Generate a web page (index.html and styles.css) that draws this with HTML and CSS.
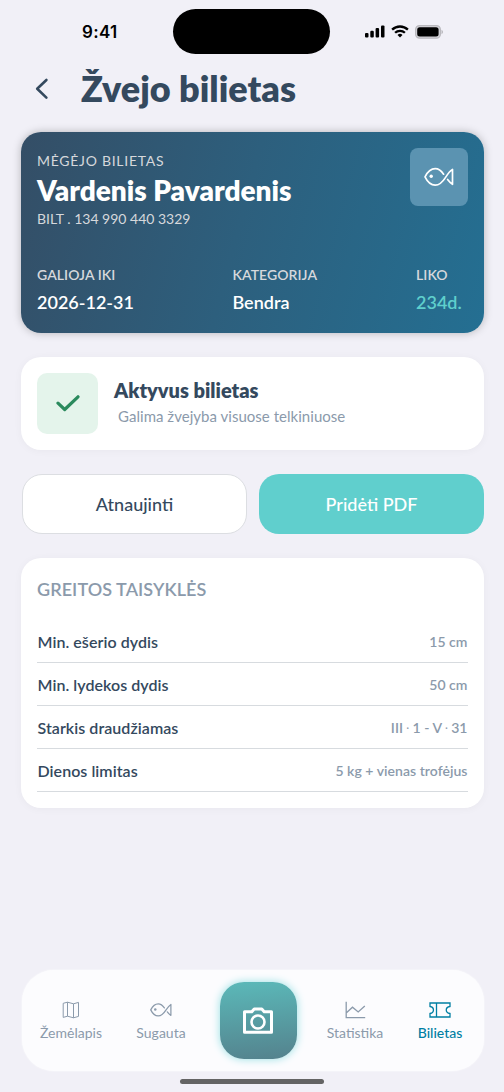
FILE: index.html
```html
<!DOCTYPE html>
<html lang="lt">
<head>
<meta charset="utf-8">
<meta name="viewport" content="width=device-width, initial-scale=1">
<title>Žvejo bilietas</title>
<link rel="stylesheet" href="styles.css">
</head>
<body>
<svg class="defs" width="0" height="0" aria-hidden="true">
  <symbol id="fish" viewBox="0 0 30 20">
    <path d="M19.600 7.200C17.200 3.600 14.400 1.600 11.200 1.600 7 1.600 3.400 5 1 9.800c2.400 4.900 6 8.300 10.200 8.300 4.300 0 7.600-3.400 10.200-7.500 2-3.100 4.200-6.400 7.100-8.200v14.900c-1.900-1.200-3.500-2.900-4.900-4.800" fill="none" stroke="currentColor" stroke-linecap="round" stroke-linejoin="round"/>
    <circle cx="7.200" cy="9.200" r="1.700" fill="currentColor"/>
  </symbol>
</svg>
<div class="status-bar">
  <span class="clock">9:41</span>
  <span class="island"></span>
  <span class="system">
    <svg width="20" height="13" viewBox="0 0 20 13" fill="#000"><rect x="0" y="8" width="3.500" height="4.600" rx="1.100"/><rect x="5.300" y="5.800" width="3.500" height="6.800" rx="1.100"/><rect x="10.600" y="3" width="3.500" height="9.600" rx="1.100"/><rect x="16" y="0.400" width="3.500" height="12.200" rx="1.100"/></svg>
    <svg width="18" height="13" viewBox="0 0 18 13" fill="none" stroke="#000" stroke-width="2.300"><path d="M1.100 4.700a11.400 11.400 0 0 1 15.800 0"/><path d="M4.100 7.800a7 7 0 0 1 9.800 0"/><path d="M9 12.500 6.500 10a3.600 3.600 0 0 1 5 0z" fill="#000" stroke="none"/></svg>
    <svg width="29" height="14" viewBox="0 0 29 14"><rect x=".6" y=".6" width="24.800" height="12.600" rx="4" fill="#d4d3d9" stroke="#b9b8bd" stroke-width="1.200"/><rect x="2.200" y="2.200" width="21.400" height="9.400" rx="2.500"/><path d="M26.500 4.700c2 .8 2 3.600 0 4.500z" fill="#b5b4b9"/></svg>
  </span>
</div>
<header class="header">
  <svg class="back" width="14" height="22" viewBox="0 0 14 22" fill="none" stroke="currentColor" stroke-width="2.600" stroke-linecap="round" stroke-linejoin="round"><path d="M11.400 2 2.200 10.800l9.200 8.800"/></svg>
  <h1>Žvejo bilietas</h1>
</header>
<main>
  <section class="ticket">
    <div class="ticket-top">
      <div>
        <p class="eyebrow">MĖGĖJO BILIETAS</p>
        <p class="name">Vardenis Pavardenis</p>
        <p class="number">BILT . 134 990 440 3329</p>
      </div>
      <div class="ticket-icon"><svg width="30" height="20" stroke-width="1.700"><use href="#fish"/></svg></div>
    </div>
    <dl class="facts">
      <div class="valid"><dt>GALIOJA IKI</dt><dd>2026-12-31</dd></div>
      <div class="category"><dt>KATEGORIJA</dt><dd>Bendra</dd></div>
      <div class="left"><dt>LIKO</dt><dd>234d.</dd></div>
    </dl>
  </section>
  <section class="active">
    <div class="check"><svg width="24" height="18" viewBox="0 0 24 18" fill="none" stroke="currentColor" stroke-width="3.200" stroke-linecap="round" stroke-linejoin="round"><path d="M2 8.200 8.700 14.500 22 1.800"/></svg></div>
    <div>
      <h2>Aktyvus bilietas</h2>
      <p>Galima žvejyba visuose telkiniuose</p>
    </div>
  </section>
  <div class="actions">
    <button class="renew">Atnaujinti</button>
    <button class="add">Pridėti PDF</button>
  </div>
  <section class="rules">
    <h3>GREITOS TAISYKLĖS</h3>
    <div class="rule"><span>Min. ešerio dydis</span><b>15 cm</b></div>
    <div class="rule"><span>Min. lydekos dydis</span><b>50 cm</b></div>
    <div class="rule"><span>Starkis draudžiamas</span><b>III <i>·</i> 1 - V <i>·</i> 31</b></div>
    <div class="rule"><span>Dienos limitas</span><b>5 kg + vienas trofėjus</b></div>
  </section>
</main>
<nav class="nav">
  <a class="map"><svg width="18" height="18" viewBox="0 0 18 18" fill="none" stroke="currentColor" stroke-linejoin="round"><path d="M1.200 2.300 5.500 1.200l6 1.600 5-1.400V15.400l-5 1.400-6-1.600-4.300 1.200zM5.500 1.200v14M11.500 2.800v14"/></svg>Žemėlapis</a>
  <a class="catch"><svg width="22" height="18" stroke-width="1.700"><use href="#fish"/></svg>Sugauta</a>
  <span class="camera"><svg width="32" height="30" viewBox="0 0 32 30" fill="none" stroke="#fff" stroke-width="3" stroke-linejoin="round"><path d="M2.500 5.800H9.800L12.200 3.100h7.600L22.200 5.800h7.300v20.500h-27z"/><circle cx="16" cy="16" r="6.500" stroke-width="2.600"/></svg></span>
  <a class="stats"><svg width="21" height="18" viewBox="0 0 21 18" fill="none" stroke="currentColor" stroke-width="1.300"><path d="M1.200 .8v15.800h19M1.200 12l6.300-5.800 5.700 4.800 6.600-6"/></svg>Statistika</a>
  <a class="pass"><svg width="22" height="18" viewBox="0 0 22 18" fill="none" stroke="currentColor" stroke-width="1.300"><path d="M1 2h20v3.500c-5 .6-5 6.400 0 7V16H1v-3.500c4.600-.6 4.600-6.400 0-7zM7.500 2v14"/></svg>Bilietas</a>
</nav>
<div class="home"></div>
</body>
</html>
```

FILE: styles.css
```css
* { box-sizing: border-box; margin: 0; padding: 0; }
body {
  width: 504px;
  height: 1092px;
  display: flex;
  flex-direction: column;
  overflow: hidden;
  background: #f1f0f7;
  color: #34495e;
  font-family: Lato, "Liberation Sans", sans-serif;
}
.defs { position: absolute; }
.status-bar { display: flex; height: 63px; padding: 9px 0 9px 82px; }
.clock { width: 91px; font: 600 17px/46px Inter, sans-serif; letter-spacing: .3px; color: #000; }
.island { flex: none; width: 157px; height: 45px; border-radius: 23px; background: #000; }
.system { display: flex; align-items: center; gap: 6px; padding-left: 35px; }
.header { display: flex; height: 69px; align-items: flex-start; padding-left: 35px; }
.back { margin-top: 15px; }
h1 { margin-left: 32px; font-size: 36px; line-height: 50px; font-weight: 800; white-space: nowrap; }
main { display: flex; flex-direction: column; gap: 24px; padding: 0 20px 0 21px; }
.ticket {
  height: 201px;
  padding: 16px;
  border-radius: 20px;
  background: linear-gradient(105deg, #344e66 0%, #2d5f7d 47%, #246f92 100%);
  box-shadow: 0 0 8px rgba(0, 0, 0, .25);
  color: #fff;
}
.ticket-top { display: flex; justify-content: space-between; height: 119px; }
.eyebrow { font-size: 14px; line-height: 26px; letter-spacing: .72px; color: #d6d8dc; }
.name { font-size: 28px; line-height: 33px; font-weight: 800; white-space: nowrap; }
.number { margin-top: 1px; font-size: 14px; line-height: 22px; color: #d6d8dc; }
.ticket-icon { display: grid; place-items: center; width: 58px; height: 58px; border-radius: 8px; background: #5b93b1; }
.facts { display: flex; }
.valid { width: 195.500px; }
.category { width: 183.500px; }
dt { font-size: 14px; line-height: 16px; font-weight: 600; letter-spacing: .06px; color: #d6d8dc; }
dd { margin-top: 7px; font-size: 18px; line-height: 24px; font-weight: 600; }
.left dd { color: #5fcfcc; }
.active { display: flex; height: 93px; padding: 16px; gap: 16px; border-radius: 20px; background: #fff; box-shadow: 0 1px 8px rgba(0, 0, 0, .04); }
.check { display: grid; place-items: center; width: 61px; height: 61px; border-radius: 10px; background: #e4f4eb; color: #2a8a5d; }
h2 { font-size: 20px; line-height: 24px; font-weight: 800; margin-top: 5px; }
.active p { margin: 4px 0 0 4px; font-size: 15px; line-height: 20px; letter-spacing: .03px; color: #8b9aab; }
.actions { display: flex; gap: 12px; padding-left: 1px; }
button { width: 225px; height: 60px; border: 0; border-radius: 20px; font: 500 18px/60px Lato, sans-serif; }
.renew { background: #fff; color: #34495e; border: 1px solid #dcdee2; line-height: 58px; }
.add { background: #60cfcd; color: #fff; }
.rules { height: 250px; padding: 16px; border-radius: 20px; background: #fff; box-shadow: 0 1px 8px rgba(0, 0, 0, .04); }
h3 { font-size: 18px; line-height: 30px; font-weight: 600; letter-spacing: .07px; color: #8b9aab; margin-bottom: 16px; }
.rule { display: flex; justify-content: space-between; height: 43px; padding: 3px .5px 0; border-bottom: 1px solid #d7dbdf; line-height: 37px; }
.rule span { font-size: 16px; font-weight: 600; letter-spacing: .05px; }
.rule b { font-size: 14px; font-weight: 600; letter-spacing: .04px; color: #8b9aab; }
.rule i { font-style: normal; font-size: 9px; position: relative; top: -2px; }
.nav {
  display: flex;
  width: 462px;
  height: 101px;
  margin: 162px 0 0 22px;
  border-radius: 32px;
  background: #fcfcfe;
  box-shadow: 0 0 2px #fff;
}
.nav a { display: flex; flex-direction: column; align-items: center; padding-top: 31px; font-size: 14px; line-height: 17px; gap: 5px; color: #8b9aab; white-space: nowrap; }
.map { width: 98px; }
.catch { width: 82px; }
.camera { display: grid; place-items: center; width: 77px; height: 77px; margin: 12px 17.500px 0 17.500px; border-radius: 24px; background: linear-gradient(175deg, #5bb9b9, #54828d); box-shadow: 0 0 9px #94dfe3; }
.stats { width: 82px; }
.nav .pass { width: 88px; color: #007fa3; font-weight: 500; }
.home { width: 144px; height: 5px; margin: 8px 0 0 180px; border-radius: 3px; background: #646464; }
```
